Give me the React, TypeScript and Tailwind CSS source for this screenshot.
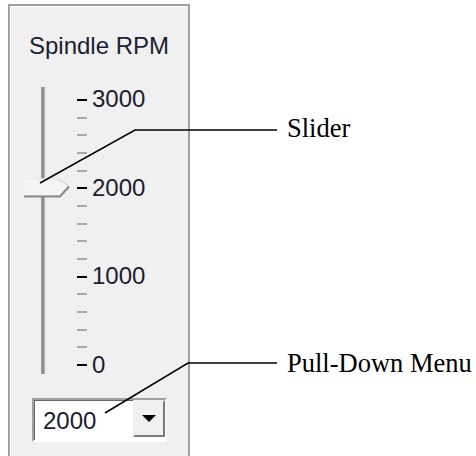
const ticks = Array.from({ length: 16 }, (_, i) => i % 5 === 0);
const labels = ['3000', '2000', '1000', '0'];

function Thumb() {
  return (
    <svg width="48" height="20" viewBox="0 0 48 20" className="absolute left-0 top-[91px]">
      <polygon points="1,1 35,1 46,8 37,18 1,18" fill="#f4f4f4" stroke="#c8c8c8" strokeWidth="1" />
      <polyline points="1,18.5 37,18.5 46,8.5" fill="none" stroke="#8a8a8a" strokeWidth="2" />
      <polyline points="1,18 1,1 35,1" fill="none" stroke="#ffffff" strokeWidth="1" />
    </svg>
  );
}

function DropDown() {
  return (
    <div className="ml-[22px] mt-[21px] flex h-[44px] w-[135px] items-start border-2 border-t-[#a0a0a0] border-l-[#a0a0a0] border-r-[#f8f8f8] border-b-[#ffffff] bg-white shadow-[inset_1px_1px_0_#696969]">
      <div className="flex h-full flex-1 items-center pl-[9px] pt-[1px] text-[24px] leading-none text-[#1c1c30]">
        2000
      </div>
      <div className="mt-[0px] flex h-[37px] w-[32px] items-center justify-center border-2 border-t-[#f0f0f0] border-l-[#f0f0f0] border-r-[#7a7a7a] border-b-[#7a7a7a] bg-[#f0f0f0]">
        <svg width="14" height="8" viewBox="0 0 14 8">
          <polygon points="0,0 14,0 7,7" fill="#000" />
        </svg>
      </div>
    </div>
  );
}

export default function App() {
  return (
    <div className="relative h-[456px] w-[476px] overflow-hidden bg-white font-['Liberation_Sans',Arial,sans-serif]">
      <div className="ml-[8px] pt-[4px]">
        <div className="h-[452px] w-[182px] border-2 border-b-0 border-[#a0a0a0] bg-[#f0f0f0] shadow-[inset_1px_1px_0_#ffffff]">
          <div className="pt-[26px] text-center text-[24px] leading-[28px] text-[#1c1c30]">Spindle RPM</div>

          <div className="mt-[27px] flex h-[290px] items-start pl-[13px]">
            <div className="relative h-[287px] w-[46px]">
              <div className="ml-[18px] h-full w-[5px] bg-gradient-to-r from-[#a0a0a0] via-[#8a8a8a] to-[#ffffff]" />
              <Thumb />
            </div>
            <div className="ml-[8px] mt-[12px] flex h-[267px] w-[10px] flex-col justify-between">
              {ticks.map((major, i) => (
                <div key={i} className={major ? 'h-[2px] bg-black' : 'h-[2px] bg-[#a8a8a8]'} />
              ))}
            </div>
            <div className="ml-[5px] flex h-[290px] flex-col justify-between text-[24px] leading-[24px] text-[#1c1c30]">
              {labels.map((l) => (
                <div key={l}>{l}</div>
              ))}
            </div>
          </div>

          <DropDown />
        </div>
      </div>

      <svg className="pointer-events-none absolute left-0 top-0" width="476" height="456">
        <polyline points="40,183 135,130 277,130" fill="none" stroke="#000" strokeWidth="1.5" />
        <polyline points="105,413 188,363 277,363" fill="none" stroke="#000" strokeWidth="1.5" />
      </svg>

      <div className="absolute left-[287px] top-[115px] font-['Liberation_Serif','Times_New_Roman',serif] text-[26.5px] leading-[26.5px] text-black">
        Slider
      </div>
      <div className="absolute left-[287px] top-[350px] font-['Liberation_Serif','Times_New_Roman',serif] text-[26.5px] leading-[26.5px] text-black">
        Pull-Down Menu
      </div>
    </div>
  );
}
